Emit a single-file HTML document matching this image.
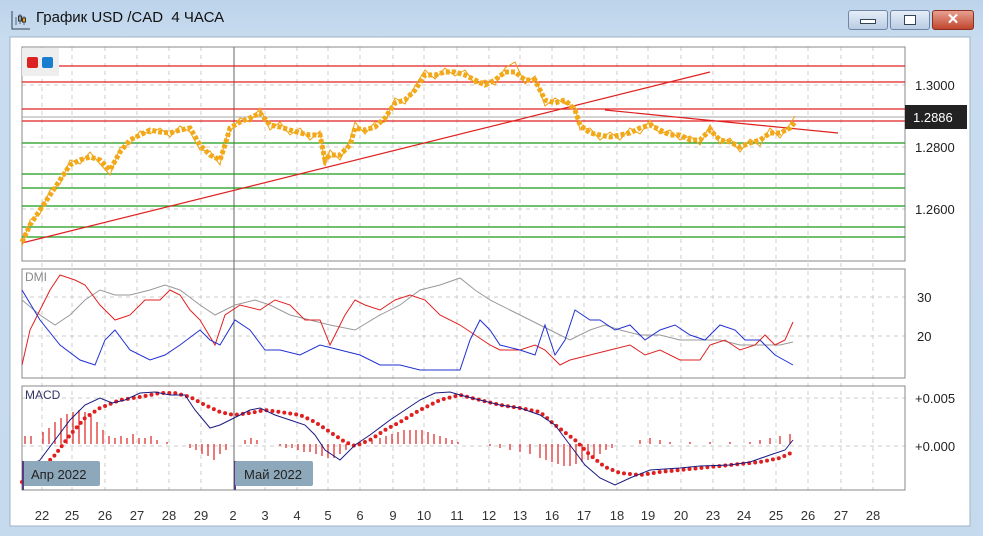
<!DOCTYPE html>
<html><head><meta charset="utf-8"><style>
body{margin:0;width:983px;height:536px;overflow:hidden;background:linear-gradient(#bcd3ea,#c9dcef 40px,#c6daee);font-family:"Liberation Sans",sans-serif}
.t{position:absolute;left:36px;top:9px;font-size:15px;color:#111}
.b{position:absolute;top:10px;width:38px;height:18px;border:1px solid #6f87a6;border-radius:3px;background:linear-gradient(#e6eef8,#b9cce3)}
</style></head><body>
<svg style="position:absolute;left:10px;top:9px" width="22" height="22" viewBox="0 0 22 22"><path d="M2 2v18h18" stroke="#345" fill="none"/><path d="M6 8v8M10 5v10M14 7v9" stroke="#567" stroke-width="1"/><rect x="8.5" y="7" width="3" height="5" fill="none" stroke="#333"/><rect x="12.5" y="9" width="3" height="4" fill="#fa0" stroke="#333"/></svg>
<div class="t">График USD /CAD&nbsp; 4 ЧАСА</div>
<div class="b" style="left:848px"><div style="margin:8px auto;width:14px;height:3px;border:1px solid #345;background:#fff"></div></div>
<div class="b" style="left:890px"><div style="margin:4px auto;width:10px;height:8px;border:1px solid #345;background:#fff"></div></div>
<div class="b" style="left:932px;width:40px;background:linear-gradient(#e8a090,#c0452e);border-color:#8a3020;color:#fff;font-weight:bold;text-align:center;line-height:18px;font-size:15px">✕</div>
<svg style="position:absolute;left:0;top:0" width="983" height="536" font-family="Liberation Sans" font-size="13">
<rect x="10" y="37" width="960" height="489" fill="#fff" stroke="#9fb3c8"/>
<g stroke="#ccc" stroke-dasharray="4 4">
<path d="M42 47V490M72 47V490M105 47V490M137 47V490M169 47V490M201 47V490M265 47V490M297 47V490M328 47V490M360 47V490M393 47V490M424 47V490M457 47V490M489 47V490M520 47V490M552 47V490M584 47V490M617 47V490M648 47V490M681 47V490M713 47V490M744 47V490M776 47V490M808 47V490M841 47V490M873 47V490"/>
<path d="M22 85H905M22 147H905M22 209H905M22 297H905M22 336H905M22 398H905M22 446H905"/>
</g>
<path d="M234 47V490" stroke="#666"/>
<rect x="22" y="47" width="883" height="214" fill="none" stroke="#888"/>
<rect x="22" y="269" width="883" height="109" fill="none" stroke="#888"/>
<rect x="22" y="386" width="883" height="104" fill="none" stroke="#888"/>
<rect x="22" y="48" width="37" height="28" fill="#eee"/>
<rect x="27" y="57" width="11" height="11" rx="2" fill="#d22"/><rect x="42" y="57" width="11" height="11" rx="2" fill="#1a7ed0"/>
<g stroke="#e02020" stroke-width="1.3"><path d="M59 66H905M22 82H905M22 109H905M22 121H905"/></g>
<path d="M22 117H905" stroke="#aaa"/>
<g stroke="#1a9a1a" stroke-width="1.3"><path d="M22 143H905M22 174H905M22 188H905M22 206H905M22 227H905M22 237H905"/></g>
<path d="M22 243L710 72M605 110L838 133" stroke="#e02020" stroke-width="1.2"/>
<polyline fill="none" stroke="#f0a010" stroke-width="1" points="22,246 30,220 40,214 50,190 60,184 70,160 80,164 90,152 100,164 110,175 120,148 130,144 140,131 150,134 160,128 170,137 180,126 190,132 200,150 210,151 220,165 225,140 230,132 240,118 250,122 260,108 270,130 280,122 290,135 300,128 310,140 320,131 325,166 330,150 340,160 350,140 355,122 365,134 375,122 385,122 395,98 405,104 415,86 425,70 435,79 445,68 455,76 465,70 475,84 485,80 495,85 505,68 515,62 525,84 535,76 545,106 555,98 565,104 575,106 580,130 590,128 600,140 610,132 620,140 630,128 640,134 650,120 660,134 670,130 680,140 690,136 700,145 710,125 720,144 730,138 740,152 750,139 760,146 770,128 780,138 790,124 795,116"/>
<polyline fill="none" stroke="#f2a817" stroke-width="5" stroke-dasharray="4 2" points="22,242 30,225 40,210 50,195 60,180 70,165 80,160 90,157 100,160 110,170 120,152 130,140 140,135 150,130 160,132 170,133 180,130 190,128 200,145 210,155 220,160 225,145 230,128 240,122 250,118 260,113 270,125 280,127 290,130 300,133 310,135 320,135 325,160 330,155 340,155 350,145 355,128 365,130 375,127 385,118 395,103 405,100 415,90 425,75 435,75 445,72 455,72 465,75 475,80 485,85 495,80 505,72 515,72 525,80 535,80 545,100 555,103 565,100 575,110 580,125 590,133 600,135 610,137 620,135 630,133 640,128 650,125 660,130 670,135 680,135 690,140 700,140 710,130 720,140 730,142 740,147 750,143 760,140 770,133 780,133 790,128 795,122"/>
<g fill="#222"><text x="915" y="90">1.3000</text><text x="915" y="152">1.2800</text><text x="915" y="214">1.2600</text><text x="917" y="302">30</text><text x="917" y="341">20</text><text x="915" y="403">+0.005</text><text x="915" y="451">+0.000</text></g>
<rect x="905" y="105" width="62" height="24" fill="#222"/><text x="913" y="122" fill="#fff">1.2886</text>
<text x="25" y="281" fill="#888" font-size="12">DMI</text>
<text x="25" y="399" fill="#336" font-size="12">MACD</text>
<polyline fill="none" stroke="#999" points="22,300 40,315 55,325 70,315 85,300 100,290 115,295 130,295 150,290 165,285 180,290 200,305 215,315 235,305 255,300 270,305 290,315 310,320 330,325 355,330 380,315 400,305 420,290 440,285 460,278 475,290 490,300 510,310 530,320 550,330 570,340 590,330 605,325 620,330 640,335 660,335 680,340 700,340 720,340 740,345 760,345 780,345 793,342"/>
<polyline fill="none" stroke="#e02020" points="22,365 30,330 40,310 50,290 60,275 75,280 85,285 100,305 115,320 130,315 145,300 160,300 170,290 180,295 190,310 200,320 215,345 225,315 240,305 260,310 275,300 290,305 305,320 320,320 330,345 345,315 355,300 365,305 380,310 395,300 410,295 425,300 440,315 460,325 475,335 490,345 500,350 520,350 535,345 545,350 560,365 570,360 590,355 610,350 630,345 645,355 660,350 680,360 700,360 710,345 725,340 740,350 755,345 765,335 775,345 785,340 793,322"/>
<polyline fill="none" stroke="#2030d0" points="22,290 40,320 60,345 80,360 95,365 105,340 115,330 130,350 150,360 165,355 180,345 200,330 210,340 220,345 235,320 250,330 265,350 280,350 300,355 320,345 340,350 360,355 380,365 400,365 420,370 440,370 460,370 470,340 480,320 490,330 500,345 520,350 535,355 545,325 555,355 565,340 575,310 590,320 600,320 615,330 630,325 645,340 660,330 675,325 690,335 705,340 720,325 735,330 745,340 760,340 775,355 793,365"/>
<path stroke="#e02020" stroke-width="1.2" d="M25 444v-8M31 444v-8M43 444v-12M49 444v-16M55 444v-22M61 444v-26M67 444v-30M73 444v-32M79 444v-34M85 444v-32M91 444v-30M97 444v-22M103 444v-14M109 444v-8M115 444v-6M121 444v-8M127 444v-6M133 444v-10M139 444v-6M145 444v-6M151 444v-8M157 444v-4M167 444v-2M190 444v4M196 444v6M202 444v10M208 444v12M214 444v16M220 444v10M226 444v6M245 444v-4M251 444v-6M257 444v-4M280 444v2M286 444v4M292 444v4M298 444v6M304 444v8M310 444v8M316 444v10M322 444v12M328 444v14M334 444v14M340 444v10M346 444v6M360 444v-2M372 444v-4M380 444v-6M386 444v-8M392 444v-10M398 444v-12M404 444v-14M410 444v-14M416 444v-14M422 444v-14M428 444v-12M434 444v-10M440 444v-8M446 444v-6M452 444v-4M458 444v-2M490 444v2M500 444v4M510 444v6M520 444v8M530 444v10M540 444v14M546 444v16M552 444v18M558 444v20M564 444v22M570 444v22M576 444v20M582 444v18M588 444v16M594 444v14M600 444v10M606 444v6M612 444v4M640 444v-4M650 444v-6M660 444v-4M670 444v-2M690 444v-2M710 444v-2M730 444v-2M750 444v-2M760 444v-4M770 444v-6M780 444v-8M790 444v-10"/>
<polyline fill="none" stroke="#e02020" stroke-width="4" stroke-linecap="round" stroke-dasharray="0 6" points="22,482 40,470 55,455 70,435 85,418 100,408 120,400 140,397 160,393 175,393 190,397 205,405 220,412 234,415 250,413 265,410 280,412 300,415 315,422 330,432 345,442 355,446 370,440 385,430 400,422 420,410 440,400 460,395 480,400 500,405 520,408 540,412 555,425 575,440 590,455 605,467 620,473 640,475 660,472 680,470 700,468 720,466 740,464 760,462 780,458 793,452"/>
<polyline fill="none" stroke="#1a1a80" points="22,470 40,460 55,440 70,420 85,405 100,398 112,403 125,400 140,393 155,392 170,395 185,395 195,410 210,428 220,425 234,418 250,410 260,408 275,415 290,420 305,425 315,435 325,450 340,460 355,445 370,435 390,420 405,410 420,400 435,393 450,392 460,395 480,400 500,405 520,408 540,415 555,425 570,445 585,465 600,478 615,485 630,478 650,470 680,468 700,466 730,465 750,462 770,455 785,450 793,440"/>
<rect x="22" y="461" width="78" height="25" rx="2" fill="#8ea8bb"/><path d="M23 461v29M235 461v29" stroke="#5a3a80" stroke-width="2"/>
<text x="31" y="479" fill="#222">Апр 2022</text>
<rect x="235" y="461" width="78" height="25" rx="2" fill="#8ea8bb"/>
<text x="244" y="479" fill="#222">Май 2022</text>
<g fill="#333" text-anchor="middle"><text x="42" y="520">22</text><text x="72" y="520">25</text><text x="105" y="520">26</text><text x="137" y="520">27</text><text x="169" y="520">28</text><text x="201" y="520">29</text><text x="233" y="520">2</text><text x="265" y="520">3</text><text x="297" y="520">4</text><text x="328" y="520">5</text><text x="360" y="520">6</text><text x="393" y="520">9</text><text x="424" y="520">10</text><text x="457" y="520">11</text><text x="489" y="520">12</text><text x="520" y="520">13</text><text x="552" y="520">16</text><text x="584" y="520">17</text><text x="617" y="520">18</text><text x="648" y="520">19</text><text x="681" y="520">20</text><text x="713" y="520">23</text><text x="744" y="520">24</text><text x="776" y="520">25</text><text x="808" y="520">26</text><text x="841" y="520">27</text><text x="873" y="520">28</text></g>
</svg>
</body></html>
